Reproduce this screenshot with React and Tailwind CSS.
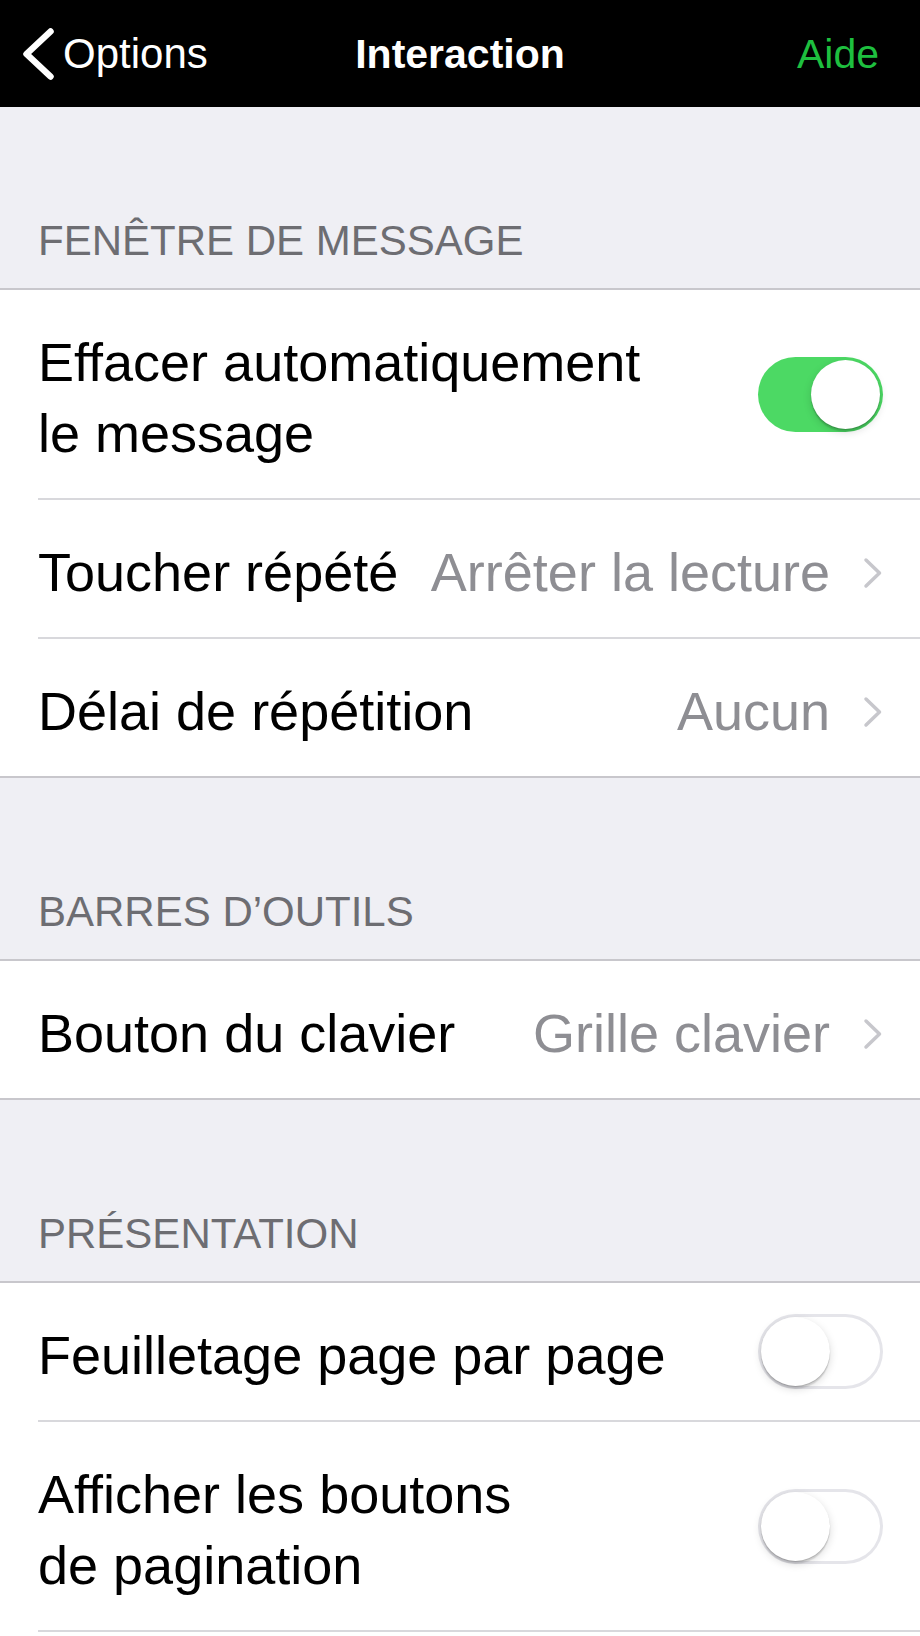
import { useState } from 'react'

const font = { fontFamily: '"Liberation Sans", Arial, sans-serif' }

function BackChevron() {
  return (
    <svg width="34" height="56" viewBox="0 0 34 56" fill="none">
      <path d="M29.5 5.5 L5.5 28 L29.5 50.5" stroke="white" strokeWidth="6.5" strokeLinecap="round" strokeLinejoin="round" />
    </svg>
  )
}

function Chevron() {
  return (
    <svg width="20" height="32" viewBox="0 0 20 32" fill="none">
      <path d="M3 3 L16.5 16 L3 29" stroke="#c7c7cc" strokeWidth="3.5" strokeLinecap="round" strokeLinejoin="round" />
    </svg>
  )
}

function Toggle({ on, onChange }) {
  if (on) {
    return (
      <button onClick={onChange} className="w-[125px] h-[75px] shrink-0 rounded-full bg-[#4cd964] p-[3px] flex justify-end">
        <span className="block w-[69px] h-[69px] rounded-full bg-white shadow-[0_3px_8px_rgba(0,0,0,0.15),0_1px_1px_rgba(0,0,0,0.16),0_3px_1px_rgba(0,0,0,0.1)]" />
      </button>
    )
  }
  return (
    <button onClick={onChange} className="w-[125px] h-[75px] shrink-0 rounded-full bg-white shadow-[inset_0_0_0_3px_#e5e5ea] p-[3px] flex justify-start">
      <span className="block w-[69px] h-[69px] rounded-full bg-white shadow-[0_3px_8px_rgba(0,0,0,0.15),0_1px_1px_rgba(0,0,0,0.16),0_3px_1px_rgba(0,0,0,0.1)]" />
    </button>
  )
}

function Header({ title }) {
  return (
    <div className="h-[183px] flex items-end pl-[38px] pb-[26px] bg-[#efeff4] border-b-2 border-[#c8c7cc]">
      <span className="text-[42px] leading-[43px] text-[#6d6d72]">{title}</span>
    </div>
  )
}

function Row({ label, value, toggle, onToggle, last, fullLine }) {
  const line = last && fullLine ? 'border-b-2 border-[#c8c7cc]' : ''
  const inner = last && fullLine ? '' : 'border-b-2 border-[#d8d8dc]'
  return (
    <div className={`pl-[38px] bg-white ${line}`}>
      <div className={`flex items-center justify-between pr-[37px] ${inner}`}>
        <span className="block pt-[37px] pb-[29px] text-[54px] leading-[71px] text-black">{label}</span>
        {toggle !== undefined ? (
          <Toggle on={toggle} onChange={onToggle} />
        ) : (
          <div className="flex items-center gap-[33px] pt-[37px] pb-[29px]">
            <span className="text-[54px] leading-[71px] text-[#8e8e93]">{value}</span>
            <Chevron />
          </div>
        )}
      </div>
    </div>
  )
}

export default function App() {
  const [autoClear, setAutoClear] = useState(true)
  const [pageFlip, setPageFlip] = useState(false)
  const [pageButtons, setPageButtons] = useState(false)

  return (
    <div className="w-[920px] h-[1636px] overflow-hidden bg-[#efeff4]" style={font}>
      <div className="h-[107px] bg-black grid grid-cols-[1fr_auto_1fr] items-center">
        <div className="flex items-center pl-[21px] gap-[8px]">
          <BackChevron />
          <span className="text-[42px] leading-[42px] text-white">Options</span>
        </div>
        <span className="text-[41px] leading-[42px] font-bold text-white">Interaction</span>
        <div className="flex justify-end pr-[41px]">
          <span className="text-[41px] leading-[42px] text-[#1ebf3f]">Aide</span>
        </div>
      </div>

      <Header title="FENÊTRE DE MESSAGE" />
      <Row
        label={<>Effacer automatiquement<br />le message</>}
        toggle={autoClear}
        onToggle={() => setAutoClear(!autoClear)}
      />
      <Row label="Toucher répété" value="Arrêter la lecture" />
      <Row label="Délai de répétition" value="Aucun" last fullLine />

      <Header title="BARRES D’OUTILS" />
      <Row label="Bouton du clavier" value="Grille clavier" last fullLine />

      <Header title="PRÉSENTATION" />
      <Row label="Feuilletage page par page" toggle={pageFlip} onToggle={() => setPageFlip(!pageFlip)} />
      <Row
        label={<>Afficher les boutons<br />de pagination</>}
        toggle={pageButtons}
        onToggle={() => setPageButtons(!pageButtons)}
      />
      <div className="bg-white h-[20px]" />
    </div>
  )
}
